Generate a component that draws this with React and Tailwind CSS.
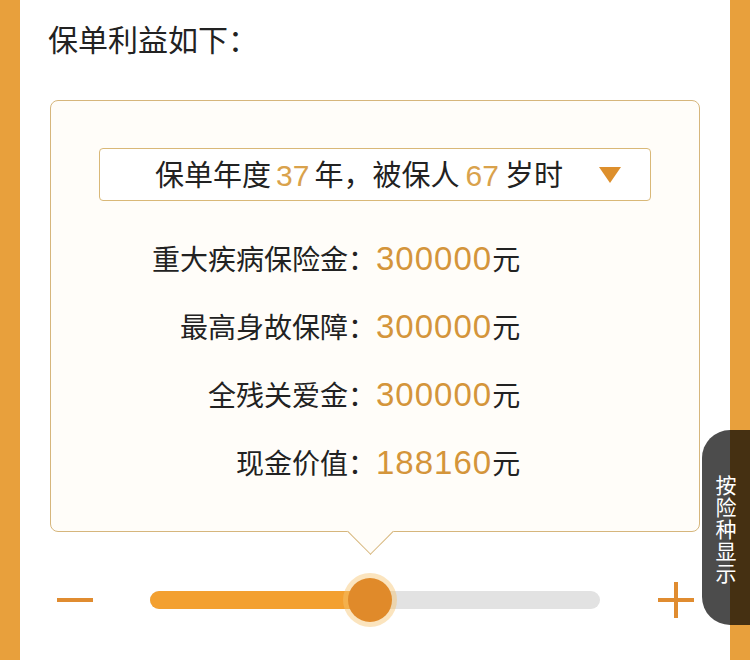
import React from "react";

const rows = [
  { label: "重大疾病保险金：", value: "300000" },
  { label: "最高身故保障：", value: "300000" },
  { label: "全残关爱金：", value: "300000" },
  { label: "现金价值：", value: "188160" },
];

const cjk = { fontFamily: '"Noto Sans CJK SC", "Noto Sans", sans-serif' };
const num = { fontFamily: '"Liberation Sans", Arial, sans-serif' };

const App = () => {
  return (
    <div
      className="relative flex w-[750px] h-[660px] overflow-hidden bg-white text-[#222]"
      style={cjk}
    >
      <div className="w-[20px] shrink-0 bg-[#e8a03c]" />

      <div className="flex-1 flex flex-col">
        {/* Title */}
        <h1 className="mt-[23px] pl-[28px] text-[30px] leading-[30px] font-normal">
          保单利益如下：
        </h1>

        {/* Benefit card */}
        <div className="relative mt-[47px] mx-[30px] rounded-[8px] border border-[#d6b67c] bg-[#fffdf9] pt-[47px] pb-[35px]">
          <div className="mx-[48px] h-[53px] flex items-center justify-center rounded-[4px] border border-[#d9b878] bg-white">
            <span className="text-[29px] leading-none flex items-baseline ml-[26px]">
              保单年度
              <span className="text-[#d9a24c] text-[30px] mx-[5px]" style={num}>37</span>
              年，被保人
              <span className="text-[#d9a24c] text-[30px] mx-[6px]" style={num}>67</span>
              岁时
            </span>
            <svg width="22" height="16" viewBox="0 0 22 16" className="ml-[36px]">
              <polygon points="0,0 22,0 11,16" fill="#dd8f2c" />
            </svg>
          </div>

          <div className="mt-[23px] flex flex-col">
            {rows.map((row) => (
              <div key={row.label} className="h-[68px] flex items-center">
                <div className="w-[325px] text-right text-[28px] leading-none">
                  {row.label}
                </div>
                <div className="flex items-baseline">
                  <span
                    className="text-[33px] leading-none tracking-[1px] text-[#d4953b]"
                    style={num}
                  >
                    {row.value}
                  </span>
                  <span className="text-[28px] leading-none">元</span>
                </div>
              </div>
            ))}
          </div>

          {/* Pointer */}
          <div className="absolute left-[303px] -bottom-[17px] w-[33px] h-[33px] rotate-45 border-r border-b border-[#d6b67c] bg-[#fffdf9]" />
        </div>

        {/* Slider */}
        <div className="mt-[46px] h-[44px] flex items-center pl-[37px]">
          <div className="w-[36px] h-[4px] bg-[#e08c30]" />
          <div className="relative ml-[57px] w-[450px] h-[18px] rounded-full bg-[#e2e2e2]">
            <div className="absolute left-0 top-0 h-full w-[220px] rounded-full bg-[#f3a030]" />
            <div className="absolute left-[198px] -top-[13px] w-[44px] h-[44px] rounded-full bg-[#e08a2a] shadow-[0_0_0_5px_rgba(246,196,110,0.45)]" />
          </div>
          <div className="relative ml-[58px] w-[36px] h-[36px]">
            <div className="absolute left-0 top-[16px] w-[36px] h-[4px] bg-[#e08c30]" />
            <div className="absolute left-[16px] top-0 w-[4px] h-[36px] bg-[#e08c30]" />
          </div>
        </div>
      </div>

      <div className="w-[20px] shrink-0 bg-[#e8a03c]" />

      {/* Floating tab */}
      <div className="absolute right-0 top-[430px] w-[48px] h-[195px] rounded-l-[28px] bg-black/70 flex items-center justify-center">
        <p className="w-[21px] text-white text-[21px] leading-[22px] break-all">
          按险种显示
        </p>
      </div>
    </div>
  );
};

export default App;
